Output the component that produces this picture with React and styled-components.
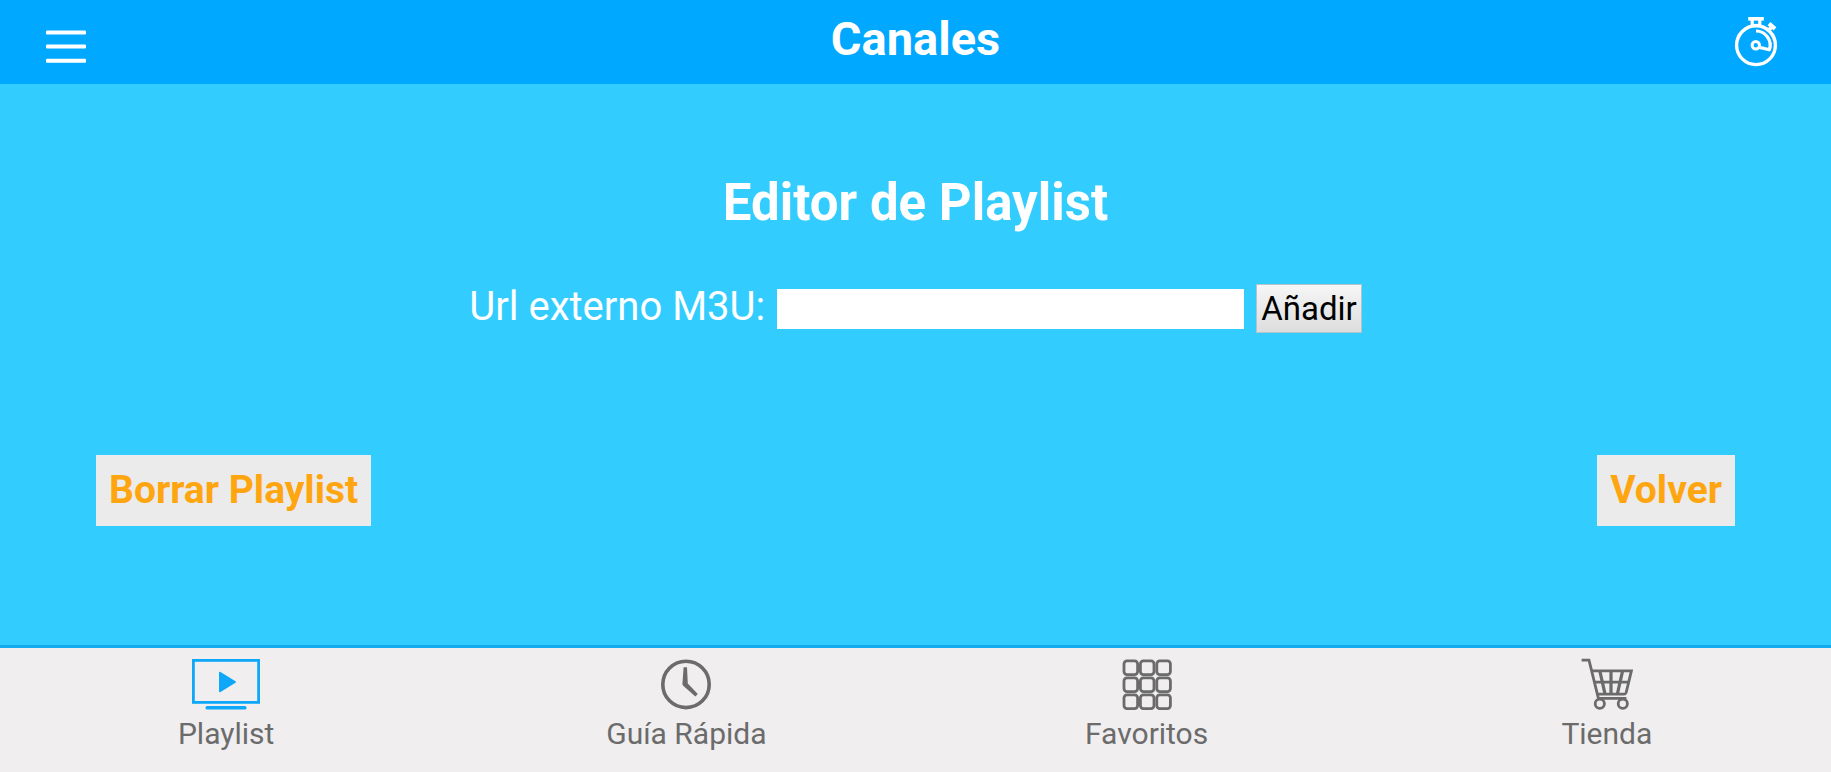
import React, { useState } from "react";
import styled, { createGlobalStyle } from "styled-components";

const TABS = [
  { id: "playlist", label: "Playlist", Icon: ScreenIcon },
  { id: "guia", label: "Guía Rápida", Icon: ClockIcon },
  { id: "favoritos", label: "Favoritos", Icon: GridIcon },
  { id: "tienda", label: "Tienda", Icon: CartIcon },
];

const App = () => {
  const [url, setUrl] = useState("");
  const [tab, setTab] = useState("playlist");

  return (
    <>
      <GlobalStyle />
      <Page>
        <Header>
          <HeaderButton type="button" aria-label="Menú">
            <MenuIcon />
          </HeaderButton>
          <HeaderTitle>Canales</HeaderTitle>
          <HeaderButton type="button" aria-label="Temporizador" $end>
            <StopwatchIcon />
          </HeaderButton>
        </Header>

        <Main>
          <Title>Editor de Playlist</Title>
          <UrlForm onSubmit={(e) => e.preventDefault()}>
            <UrlLabel htmlFor="url">Url externo M3U:</UrlLabel>
            <UrlInput
              id="url"
              type="text"
              value={url}
              onChange={(e) => setUrl(e.target.value)}
            />
            <AddButton type="submit">Añadir</AddButton>
          </UrlForm>
          <Actions>
            <ActionButton type="button" onClick={() => setUrl("")}>
              Borrar Playlist
            </ActionButton>
            <ActionButton type="button">Volver</ActionButton>
          </Actions>
        </Main>

        <TabBar>
          <TabList>
            {TABS.map(({ id, label, Icon }) => (
              <Tab
                key={id}
                type="button"
                $active={tab === id}
                onClick={() => setTab(id)}
              >
                <Icon />
                <span>{label}</span>
              </Tab>
            ))}
          </TabList>
        </TabBar>
      </Page>
    </>
  );
};

export default App;

function MenuIcon() {
  return (
    <svg width="40" height="34" viewBox="0 0 40 34" fill="currentColor">
      <rect y="0.4" width="40" height="4" rx="1" />
      <rect y="14.6" width="40" height="4" rx="1" />
      <rect y="28.8" width="40" height="4" rx="1" />
    </svg>
  );
}

function StopwatchIcon() {
  return (
    <svg width="44" height="50" viewBox="0 0 44 50" fill="none" stroke="currentColor">
      <circle cx="22" cy="28.2" r="19.4" strokeWidth="3.4" />
      <path d="M14.2 1.8h15.6" strokeWidth="3.6" />
      <path d="M18.2 3v7M25.8 3v7" strokeWidth="3.2" />
      <path d="M18 7.8h8" strokeWidth="1.8" />
      <path d="M35 6.6l6 5.2" strokeWidth="4.2" />
      <path d="M38 9.6l-3.6 4" strokeWidth="3.8" />
      <circle cx="21.8" cy="28.2" r="3.7" strokeWidth="3" />
      <path
        d="M22 14a14.2 14.2 0 0 1 13.4 18.8l-9.8-2.4"
        strokeWidth="3.2"
        strokeLinejoin="round"
      />
    </svg>
  );
}

function ScreenIcon() {
  return (
    <svg width="68" height="52" viewBox="0 0 68 52" fill="currentColor">
      <rect
        x="1.4"
        y="2.4"
        width="65.2"
        height="42"
        fill="none"
        stroke="currentColor"
        strokeWidth="2.8"
      />
      <path
        d="M28 14.8v18.4L43 24z"
        stroke="currentColor"
        strokeWidth="2"
        strokeLinejoin="round"
      />
      <rect x="13.5" y="48" width="41" height="3.6" rx="1.6" />
    </svg>
  );
}

function ClockIcon() {
  return (
    <svg width="50" height="52" viewBox="0 0 50 52" fill="currentColor">
      <circle
        cx="25"
        cy="26.4"
        r="23.2"
        fill="none"
        stroke="currentColor"
        strokeWidth="3.6"
      />
      <path d="M22.6 9.2h3.4l.8 16.4 10 10.4-2.4 2.5L22.2 27.8l-.8-1.6z" />
    </svg>
  );
}

function GridIcon() {
  const steps = [0, 1, 2];
  return (
    <svg
      width="50"
      height="52"
      viewBox="0 0 50 52"
      fill="none"
      stroke="currentColor"
      strokeWidth="2.8"
    >
      {steps.map((row) =>
        steps.map((col) => (
          <rect
            key={`${row}-${col}`}
            x={2 + col * 16.4}
            y={2.8 + row * 17}
            width="13.6"
            height="13.8"
            rx="3"
          />
        ))
      )}
    </svg>
  );
}

function CartIcon() {
  return (
    <svg
      width="52"
      height="52"
      viewBox="0 0 52 52"
      fill="none"
      stroke="currentColor"
      strokeWidth="2.8"
    >
      <path d="M0.6 2.2H8l9.4 38.2h28" />
      <path d="M10.8 12.8h39.6l-5.2 21.6q-.6 1.8-2.2 1.8H16.6" />
      <path d="M13.6 24.2h34.2" />
      <path d="M18.8 12.8l5.2 23M30 12.8v23M41.6 12.8l-5.2 23" strokeWidth="3.2" />
      <circle cx="18.8" cy="45.8" r="4.6" />
      <circle cx="41.8" cy="45.8" r="4.6" />
    </svg>
  );
}

const GlobalStyle = createGlobalStyle`
  * {
    box-sizing: border-box;
  }
  body {
    margin: 0;
    font-family: Roboto, sans-serif;
  }
  button,
  input {
    font-family: inherit;
  }
`;

const Page = styled.div`
  display: flex;
  flex-direction: column;
  min-height: 100vh;
  overflow: hidden;
  background: #33ccff;
  color: #fff;
`;

const Header = styled.header`
  display: grid;
  grid-template-columns: 1fr auto 1fr;
  height: 84px;
  padding: 0 46px;
  background: #00a8ff;
`;

const HeaderButton = styled.button`
  display: flex;
  justify-self: ${(props) => (props.$end ? "end" : "start")};
  align-self: start;
  margin: ${(props) => (props.$end ? "17px 7px 0 0" : "30px 0 0")};
  padding: 0;
  border: none;
  background: none;
  color: #fff;
  cursor: pointer;
`;

const HeaderTitle = styled.h1`
  margin: 0;
  font-size: 47px;
  line-height: 78px;
  font-weight: 700;
`;

const Main = styled.main`
  flex: 1;
  display: flex;
  flex-direction: column;
  padding: 89px 96px 0;
`;

const Title = styled.h2`
  margin: 0;
  font-size: 51px;
  line-height: 60px;
  font-weight: 700;
  text-align: center;
`;

const UrlForm = styled.form`
  display: flex;
  justify-content: center;
  align-items: center;
  gap: 12px;
  margin-top: 51px;
`;

const UrlLabel = styled.label`
  padding-bottom: 3px;
  font-size: 40px;
  line-height: 44px;
`;

const UrlInput = styled.input`
  width: 467px;
  height: 40px;
  padding: 0 4px;
  border: none;
  background: #fff;
  font-size: 28px;
`;

const AddButton = styled.button`
  height: 49px;
  padding: 0 4px;
  border: 1px solid #b4c4cc;
  background: linear-gradient(#f6f6f6, #dddddd);
  color: #000;
  font-size: 33px;
  cursor: pointer;
`;

const Actions = styled.div`
  display: flex;
  justify-content: space-between;
  margin-top: 122px;
`;

const ActionButton = styled.button`
  height: 71px;
  padding: 0 13px 2px;
  border: none;
  background: #ebebeb;
  color: #ffa50f;
  font-size: 39px;
  font-weight: 700;
  cursor: pointer;
`;

const TabBar = styled.nav`
  height: 127px;
  border-top: 3px solid #12a9ee;
  background: #f0eeef;
`;

const TabList = styled.div`
  display: grid;
  grid-template-columns: repeat(4, 1fr);
  margin: 0 -6px 0 -4px;
`;

const Tab = styled.button`
  display: flex;
  flex-direction: column;
  align-items: center;
  padding: 10px 0 0;
  border: none;
  background: none;
  color: #6b6b6b;
  font-size: 30px;
  line-height: 48px;
  cursor: pointer;

  & > svg {
    color: ${(props) => (props.$active ? "#0fa8f8" : "#6b6b6b")};
  }
`;
